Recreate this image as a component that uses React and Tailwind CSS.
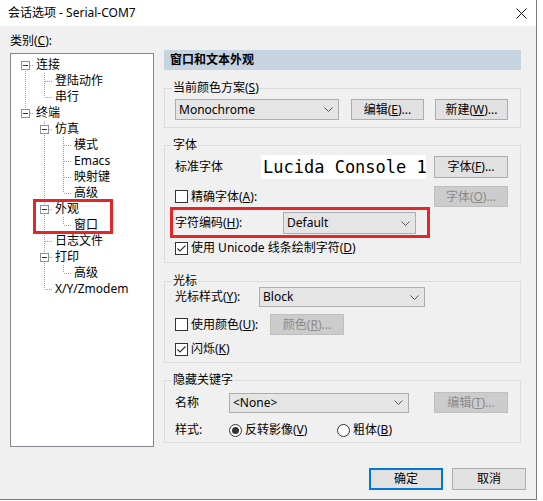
import React from 'react';

const tree = [
  { t: '连接', l: 0, kids: true, next: true, first: true, g: [] },
  { t: '登陆动作', l: 1, next: true, g: [true] },
  { t: '串行', l: 1, next: false, g: [true] },
  { t: '终端', l: 0, kids: true, next: false, g: [] },
  { t: '仿真', l: 1, kids: true, next: true, g: [false] },
  { t: '模式', l: 2, next: true, g: [false, true] },
  { t: 'Emacs', l: 2, next: true, g: [false, true] },
  { t: '映射键', l: 2, next: true, g: [false, true] },
  { t: '高级', l: 2, next: false, g: [false, true] },
  { t: '外观', l: 1, kids: true, next: true, g: [false] },
  { t: '窗口', l: 2, next: false, g: [false, true] },
  { t: '日志文件', l: 1, next: true, g: [false] },
  { t: '打印', l: 1, kids: true, next: true, g: [false] },
  { t: '高级', l: 2, next: false, g: [false, true] },
  { t: 'X/Y/Zmodem', l: 1, next: false, g: [false] },
];

const LINE = '#a0a0a0';

function Guide({ on }) {
  return (
    <svg width="19" height="16" className="shrink-0">
      {on && <line x1="9.5" y1="0" x2="9.5" y2="16" stroke={LINE} strokeDasharray="1 1" />}
    </svg>
  );
}

function Conn({ first, next, kids }) {
  return (
    <svg width="19" height="16" className="shrink-0">
      <line x1="9.5" y1={first ? 8 : 0} x2="9.5" y2={next ? 16 : 8} stroke={LINE} strokeDasharray="1 1" />
      <line x1="10" y1="8.5" x2="18" y2="8.5" stroke={LINE} strokeDasharray="1 1" />
      {kids && (
        <>
          <rect x="5.5" y="4.5" width="8" height="8" fill="#fff" stroke="#919191" />
          <line x1="7" y1="8.5" x2="12" y2="8.5" stroke="#333" />
        </>
      )}
    </svg>
  );
}

function Chevron() {
  return (
    <svg width="9" height="5" viewBox="0 0 9 5" className="shrink-0">
      <polyline points="0.5,0.5 4.5,4.5 8.5,0.5" fill="none" stroke="#555" strokeWidth="1" />
    </svg>
  );
}

function Combo({ value, className }) {
  return (
    <div className={`flex items-center justify-between border border-[#adadad] bg-[#e5e5e5] pl-[3px] pr-[5px] ${className}`}>
      <span>{value}</span>
      <Chevron />
    </div>
  );
}

function Btn({ children, disabled, def, className = '' }) {
  const look = disabled
    ? 'bg-[#cccccc] border-[#bfbfbf] text-[#8a8a8a] border'
    : def
      ? 'bg-[#e1e1e1] border-[#0078d7] border-2'
      : 'bg-[#e1e1e1] border-[#adadad] border';
  return (
    <div className={`flex shrink-0 items-center justify-center ${look} ${className}`}>{children}</div>
  );
}

function Check({ checked }) {
  return (
    <div className="flex h-[13px] w-[13px] shrink-0 items-center justify-center border border-[#333] bg-white">
      {checked && (
        <svg width="11" height="11" viewBox="0 0 11 11">
          <polyline points="1.5,5.5 4,8 9.5,2.5" fill="none" stroke="#333" strokeWidth="1.2" />
        </svg>
      )}
    </div>
  );
}

function Radio({ checked }) {
  return (
    <div className="flex h-[13px] w-[13px] shrink-0 items-center justify-center rounded-full border border-[#333] bg-white">
      {checked && <div className="h-[7px] w-[7px] rounded-full bg-[#333]" />}
    </div>
  );
}

function Group({ label, className = '', tight, children }) {
  return (
    <fieldset className={`border border-[#dcdcdc] pl-[10px] pr-[12px] ${className}`}>
      <legend className={`ml-[-3px] px-[1px] ${tight ? 'leading-[12px]' : 'leading-[16px]'}`}>{label}</legend>
      {children}
    </fieldset>
  );
}

const U = ({ c }) => <span className="underline underline-offset-1">{c}</span>;

export default function App() {
  return (
    <div className="h-[501px] w-[543px] bg-white text-[12px] leading-[16px] text-black font-['Noto_Sans','Noto_Sans_CJK_SC',sans-serif]">
      <div className="flex h-[500px] w-[537px] flex-col border-b border-r border-[#7a7a7a]">
        <div className="flex h-[26px] shrink-0 items-center justify-between bg-white pl-[8px] pr-[9px]">
          <span>会话选项 - Serial-COM7</span>
          <svg width="11" height="11" viewBox="0 0 11 11">
            <path d="M0.5 0.5 L10.5 10.5 M10.5 0.5 L0.5 10.5" stroke="#111" strokeWidth="1" />
          </svg>
        </div>

        <div className="flex flex-1 bg-[#f0f0f0]">
          {/* left: category tree */}
          <div className="w-[164px] shrink-0 pl-[10px] pt-[7px]">
            <div className="h-[16px]">类别(<U c="C" />):</div>
            <div className="mt-[4px] h-[394px] w-[144px] border border-[#828790] bg-white pl-[5px] pt-[3px]">
              <div className="relative">
                {tree.map((n, i) => (
                  <div key={i} className="flex h-[16px] items-center">
                    {n.g.map((on, j) => <Guide key={j} on={on} />)}
                    <Conn first={n.first} next={n.next} kids={n.kids} />
                    <span className="ml-[1px] whitespace-nowrap">{n.t}</span>
                  </div>
                ))}
                <div className="absolute left-[17px] top-[142px] h-[35px] w-[80px] border-[3px] border-[#e3262a]" />
              </div>
            </div>
          </div>

          {/* right: settings */}
          <div className="flex w-[372px] flex-col pt-[24px]">
            <div className="flex h-[20px] w-[357px] items-center bg-[#c6d4e1] pl-[6px] font-bold">窗口和文本外观</div>

            <div className="w-[357px]">
              <Group label={<>当前颜色方案(<U c="S" />)</>} className="mt-[10px] pb-[7px]">
                <div className="mt-[3px] flex h-[21px] items-center">
                  <Combo value="Monochrome" className="h-[21px] w-[164px]" />
                  <Btn className="ml-[12px] h-[21px] w-[73px]">编辑(<U c="E" />)...</Btn>
                  <Btn className="ml-[11px] h-[21px] w-[73px]">新建(<U c="W" />)...</Btn>
                </div>
              </Group>

              <Group label="字体" className="mt-[9px] pb-[6px]">
                <div className="mt-[2px] flex h-[24px] items-center">
                  <span className="w-[86px] shrink-0">标准字体</span>
                  <div className="flex h-[24px] w-[165px] shrink-0 items-center overflow-hidden whitespace-nowrap bg-white pl-[2px] text-[17px] font-['DejaVu_Sans_Mono',monospace]">
                    Lucida Console 1
                  </div>
                  <Btn className="ml-auto h-[22px] w-[74px]">字体(<U c="F" />)...</Btn>
                </div>
                <div className="mt-[7px] flex h-[21px] items-center">
                  <Check />
                  <span className="ml-[3px]">精确字体(<U c="A" />):</span>
                  <Btn disabled className="ml-auto h-[21px] w-[74px]">字体(<U c="O" />)...</Btn>
                </div>
                <div className="relative mt-[5px] flex h-[22px] items-center">
                  <span className="w-[108px] shrink-0">字符编码(<U c="H" />):</span>
                  <Combo value="Default" className="h-[22px] w-[133px]" />
                  <div className="absolute left-[-5px] top-[-5px] h-[31px] w-[260px] border-[3px] border-[#e3262a]" />
                </div>
                <div className="mt-[6px] flex h-[16px] items-center">
                  <Check checked />
                  <span className="ml-[3px]">使用 Unicode 线条绘制字符(<U c="D" />)</span>
                </div>
              </Group>

              <Group label="光标" tight className="mt-[12px] pb-[5px]">
                <div className="flex h-[20px] items-center">
                  <span className="w-[84px] shrink-0">光标样式(<U c="Y" />):</span>
                  <Combo value="Block" className="h-[20px] w-[166px]" />
                </div>
                <div className="mt-[7px] flex h-[21px] items-center">
                  <div className="flex w-[95px] shrink-0 items-center">
                    <Check />
                    <span className="ml-[3px]">使用颜色(<U c="U" />):</span>
                  </div>
                  <Btn disabled className="h-[21px] w-[74px]">颜色(<U c="R" />)...</Btn>
                </div>
                <div className="mt-[6px] flex h-[16px] items-center">
                  <Check checked />
                  <span className="ml-[3px]">闪烁(<U c="K" />)</span>
                </div>
              </Group>

              <Group label="隐藏关键字" className="mt-[9px] pb-[4px]">
                <div className="mt-[4px] flex h-[21px] items-center">
                  <span className="w-[54px] shrink-0">名称</span>
                  <Combo value="<None>" className="h-[20px] w-[180px]" />
                  <Btn disabled className="ml-auto h-[21px] w-[74px]">编辑(<U c="T" />)...</Btn>
                </div>
                <div className="mt-[9px] flex h-[16px] items-center">
                  <span className="w-[54px] shrink-0">样式:</span>
                  <Radio checked />
                  <span className="ml-[3px] w-[92px]">反转影像(<U c="V" />)</span>
                  <Radio />
                  <span className="ml-[3px]">粗体(<U c="B" />)</span>
                </div>
              </Group>
            </div>

            <div className="mt-[25px] flex justify-end gap-[9px] pr-[10px]">
              <Btn def className="h-[22px] w-[74px]">确定</Btn>
              <Btn className="h-[22px] w-[74px]">取消</Btn>
            </div>
          </div>
        </div>
      </div>
    </div>
  );
}
